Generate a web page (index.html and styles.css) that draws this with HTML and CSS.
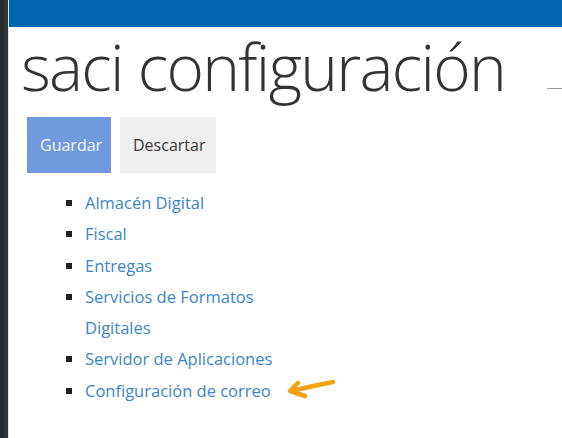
FILE: index.html
```html
<!DOCTYPE html>
<html lang="es">
<head>
<meta charset="utf-8">
<title>saci configuración</title>
<link rel="stylesheet" href="styles.css">
</head>
<body>
<div class="page">
  <div class="side"></div>
  <div class="main">
    <div class="topbar"></div>
    <div class="content">
      <div class="title-row">
        <h1 class="title">saci configuración</h1>
        <span class="tail"></span>
      </div>
      <div class="actions">
        <button class="btn btn-primary">Guardar</button>
        <button class="btn btn-default">Descartar</button>
      </div>
      <ul class="menu">
        <li><a href="#">Almacén Digital</a></li>
        <li><a href="#">Fiscal</a></li>
        <li><a href="#">Entregas</a></li>
        <li><a href="#">Servicios de Formatos Digitales</a></li>
        <li><a href="#">Servidor de Aplicaciones</a></li>
        <li><a href="#">Configuración de correo</a></li>
      </ul>
    </div>
  </div>
</div>
<svg class="arrow" width="562" height="438" viewBox="0 0 562 438">
  <path d="M291 391 Q312 386 333 382" />
  <path d="M298 383 L290 391 L305 396" />
</svg>
</body>
</html>
```
FILE: styles.css
```css
html, body {
  margin: 0;
  padding: 0;
  background: #ffffff;
  height: 100%;
  overflow: hidden;
}
.page {
  display: flex;
  height: 438px;
}
.side {
  flex-shrink: 0;
  width: 4px;
  background: #252a2a;
  border-right: 4px solid #30363a;
}
.main {
  flex: 1;
  min-width: 0;
  display: flex;
  flex-direction: column;
  border-left: 1px solid #dfe3e6;
}
.topbar {
  height: 27px;
  background: #0067b1;
}
.content {
  padding-left: 14px;
}
.title-row {
  display: flex;
  align-items: flex-end;
}
.title {
  margin: 0 0 0 -2px;
  font-family: "Open Sans", sans-serif;
  font-weight: 300;
  font-size: 64px;
  line-height: 80px;
  letter-spacing: -1.7px;
  color: #333333;
  white-space: nowrap;
}
.tail {
  flex-shrink: 0;
  width: 20px;
  height: 1px;
  background: #9a9a9a;
  margin: 0 0 18px 42px;
}
.actions {
  display: flex;
  gap: 9px;
  margin: 10px 0 0 4px;
}
.btn {
  border: none;
  height: 56px;
  padding: 0 13px;
  font-family: "Open Sans", sans-serif;
  font-size: 16px;
}
.btn-primary {
  background: #7199dd;
  color: #f4f7fd;
  width: 84px;
}
.btn-default {
  background: #efefef;
  color: #3a3a3a;
  width: 96px;
}
.menu {
  list-style: square;
  margin: 14px 0 0 0;
  padding-left: 62px;
  width: 210px;
  font-family: "Open Sans", sans-serif;
  font-size: 16.5px;
  line-height: 31.3px;
}
.menu li {
  color: #222222;
}
.menu a {
  color: #3a86c7;
  text-decoration: none;
}
.arrow {
  position: absolute;
  left: 0;
  top: 0;
  pointer-events: none;
}
.arrow path {
  fill: none;
  stroke: #f6a312;
  stroke-width: 4.5;
  stroke-linecap: round;
  stroke-linejoin: round;
}
```
